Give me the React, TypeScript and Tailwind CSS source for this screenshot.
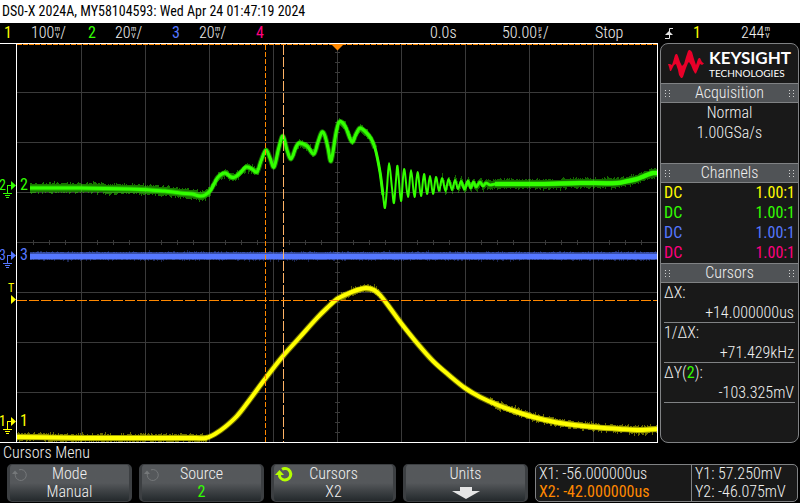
import type { ReactNode } from "react";

type Point = [number, number];

const YELLOW = "#ffff00";
const GREEN = "#33ff00";
const BLUE = "#5577ff";
const ORANGE = "#ff8800";

const greenPoints: Point[] = [
  [30, 188], [80, 188], [130, 189], [150, 190], [165, 191], [180, 193], [192, 194], [200, 196], [205, 195],
  [210, 191], [214, 184], [218, 177], [225, 173], [231, 177], [235, 177], [240, 173], [246, 167], [252, 169],
  [257, 172], [261, 161], [266, 150], [270, 158], [274, 167], [279, 147], [283, 136], [287, 150], [291, 159],
  [296, 147], [299, 143], [307, 146], [314, 154], [318, 142], [322, 132], [325, 136], [328, 148], [331, 161],
  [336, 133], [339, 122], [345, 126], [352, 142], [356, 134], [360, 128], [370, 137], [375, 148], [380, 172],
  [383, 195], [385, 208], [387, 188], [389, 163], [392, 188], [394, 203], [396, 180], [397.5, 166], [401, 201],
  [404, 169], [408, 197], [411, 170], [414.5, 197], [417.5, 172], [421, 196], [424, 174], [427, 194], [430, 176],
  [433, 194], [436, 177], [439, 191], [442, 178], [445.5, 191], [448.5, 179], [452, 190], [455, 180], [458, 189],
  [461, 181], [464.5, 189], [468, 181], [470.5, 188], [473.5, 182], [476, 187], [480, 182], [483, 186],
  [486, 183], [490, 185], [495, 184], [500, 184], [540, 184], [580, 183], [617, 183], [628, 181], [637, 179],
  [642, 177], [647, 175], [653, 173], [657, 173],
];

const yellowPoints: Point[] = [
  [17, 437], [80, 438], [140, 438], [196, 438], [206, 438], [215, 434], [225, 427], [237, 416], [248, 402],
  [265, 379], [283, 356], [300, 337], [317, 318], [327, 308], [337, 299], [347, 294], [357, 290], [366, 288],
  [374, 290], [380, 295], [390, 308], [401, 323], [417, 343], [433, 361], [450, 376], [465, 388], [480, 397],
  [500, 406], [520, 413], [537, 418], [560, 423], [593, 427], [620, 429], [637, 430], [657, 429],
];

// Catmull-Rom spline through the samples, written as cubic segments.
function spline(points: Point[]): string {
  let d = `M${points[0][0]} ${points[0][1]}`;
  for (let i = 0; i < points.length - 1; i++) {
    const a = points[Math.max(i - 1, 0)];
    const b = points[i];
    const c = points[i + 1];
    const e = points[Math.min(i + 2, points.length - 1)];
    const dx = (c[0] - b[0]) / 3;
    const s1 = (c[1] - a[1]) / (c[0] - a[0] || 1);
    const s2 = (e[1] - b[1]) / (e[0] - b[0] || 1);
    d += `C${b[0] + dx} ${b[1] + s1 * dx} ${c[0] - dx} ${c[1] - s2 * dx} ${c[0]} ${c[1]}`;
  }
  return d;
}

function valueAt(points: Point[], x: number): number {
  const i = Math.max(1, points.findIndex((p) => p[0] >= x));
  const [x0, y0] = points[i - 1];
  const [x1, y1] = points[i];
  return y0 + ((y1 - y0) * (x - x0)) / (x1 - x0);
}

// One-pixel columns of acquisition noise around a trace.
function noise(points: Point[], from: number, to: number, reach: number, seed: number): string {
  let state = seed;
  const next = () => {
    state = (state * 1103515245 + 12345) % 2147483648;
    return state / 2147483648;
  };
  let d = "";
  for (let x = from; x < to; x++) {
    const y = Math.round(valueAt(points, x));
    const up = Math.round(reach - 1 + next() * 3 * next());
    const down = Math.round(reach - 1 + next() * 3 * next());
    d += `M${x + 0.5} ${y - up}V${y + down}`;
  }
  return d;
}

const bluePoints: Point[] = [[30, 256], [657, 256]];
const range = (n: number) => Array.from({ length: n }, (_, i) => i);

function GroundMarker({ y, color, label }: { y: number; color: string; label: string }) {
  return (
    <g fill={color} stroke="none">
      <text x="-1" y={y + 5} fontSize="14">{label}</text>
      <path d={`M11 ${y - 4}V${y + 5}L16 ${y + 0.5}Z`} />
      <g shapeRendering="crispEdges">
        <path
          d={`M11 ${y + 0.5}H7.5V${y + 8}M3 ${y + 8.5}H12M5 ${y + 10.5}H10M6 ${y + 12.5}H9`}
          fill="none"
          stroke={color}
        />
      </g>
      <text x="20" y={y + 5} fontSize="16">{label}</text>
    </g>
  );
}

function Graticule() {
  return (
    <svg viewBox="0 43 660 400" className="block w-full font-normal" role="img" aria-label="Oscilloscope traces">
      <g stroke="#3a3a3a" fill="none" shapeRendering="crispEdges">
        {range(9).map((i) => (
          <path key={i} d={`M${81.5 + i * 64} 44V442`} />
        ))}
        {range(7).map((i) => (
          <path key={i} d={`M17 ${92.5 + i * 50}H657`} />
        ))}
        {range(39).map((i) => (
          <path key={i} d={`M${33.5 + i * 16} 240V245`} />
        ))}
        {range(39).map((i) => (
          <path key={i} d={`M335 ${52.5 + i * 10}H340`} />
        ))}
      </g>

      <g fill="none" strokeLinejoin="round">
        <g stroke={BLUE} shapeRendering="crispEdges">
          <path d={noise(bluePoints, 30, 657, 4, 5)} opacity="0.3" />
          <path d="M30 256H657" strokeWidth="8" opacity="0.5" />
          <path d="M30 256.5H657" strokeWidth="5" />
        </g>
        <g stroke={GREEN}>
          <path d={noise(greenPoints, 30, 210, 5, 11)} opacity="0.45" />
          <path d={noise(greenPoints, 210, 260, 4, 12)} opacity="0.4" />
          <path d={noise(greenPoints, 294, 314, 4, 13)} opacity="0.4" />
          <path d={noise(greenPoints, 338, 374, 4, 14)} opacity="0.4" />
          <path d={noise(greenPoints, 440, 657, 5, 15)} opacity="0.4" />
          <path d={spline(greenPoints.filter((p) => p[0] < 376))} strokeWidth="5" opacity="0.45" />
          <path d={spline(greenPoints.filter((p) => p[0] < 384))} strokeWidth="3" />
          <path d={spline(greenPoints.filter((p) => p[0] > 494))} strokeWidth="5" opacity="0.6" />
          <path d={spline(greenPoints.filter((p) => p[0] > 494))} strokeWidth="4" />
          <path d={spline(greenPoints.filter((p) => p[0] > 460))} strokeWidth="3" opacity="0.8" />
          <path d={spline(greenPoints)} strokeWidth="2" />
        </g>
        <g stroke={YELLOW}>
          <path d={noise(yellowPoints, 17, 207, 4, 21)} opacity="0.4" />
          <path d={noise(yellowPoints, 340, 380, 4, 22)} opacity="0.35" />
          <path d={noise(yellowPoints, 490, 657, 4, 23)} opacity="0.4" />
          <path d={spline(yellowPoints)} strokeWidth="6" opacity="0.4" />
          <path d={spline(yellowPoints)} strokeWidth="4" />
        </g>
      </g>

      <g fill="none" shapeRendering="crispEdges">
        <path d="M17 44.5H657" stroke={ORANGE} strokeDasharray="5 1" />
        <path d="M265.5 45V442" stroke={ORANGE} strokeDasharray="5 2" />
        <path d="M283.5 45V442" stroke="#ffb366" strokeDasharray="10 2" />
        <path d="M17 300.5H657" stroke={ORANGE} strokeDasharray="10 2" />
        <path d="M0 43.5H658M16.5 43V443M657.5 43V443M0 442.5H658" stroke="#fff" />
      </g>
      <path d="M331 44H344L337.5 50.5Z" fill={ORANGE} />

      <GroundMarker y={185} color={GREEN} label="2" />
      <GroundMarker y={255} color={BLUE} label="3" />
      <GroundMarker y={421} color={YELLOW} label="1" />
      <text x="8" y="292" fontSize="12" fill={YELLOW}>T</text>
      <path d="M11 295V304L16 299.5Z" fill={YELLOW} />
    </svg>
  );
}

function Unit({ top, bottom }: { top: string; bottom: string }) {
  return (
    <span className="flex w-[6px] flex-col items-center text-[7px] leading-[7px] font-normal">
      <span>{top}</span>
      <span>{bottom}</span>
    </span>
  );
}

function ChannelScale({ id, scale, tone }: { id: string; scale: string; tone: string }) {
  return (
    <div className="flex items-center">
      <span className={`w-[27px] font-normal ${tone}`}>{id}</span>
      <span>{scale}</span>
      <Unit top="m" bottom="V" />
      <span>/</span>
    </div>
  );
}

function StatusBar() {
  return (
    <div className="grid h-5 grid-cols-[84fr_84fr_84fr_174fr_72fr_93fr_70fr_28fr_48fr_55fr] items-center px-1 leading-5">
      <ChannelScale id="1" scale="100" tone="text-[#ffff00]" />
      <ChannelScale id="2" scale="20" tone="text-[#33ff00]" />
      <ChannelScale id="3" scale="20" tone="text-[#5577ff]" />
      <span className="font-normal text-[#ff0080]">4</span>
      <span>0.0s</span>
      <span className="flex items-center">
        50.00
        <Unit top="µ" bottom="s" />/
      </span>
      <span>Stop</span>
      <svg viewBox="0 0 8 11" className="h-[11px] w-2" aria-label="Rising edge trigger">
        <path d="M0 10.5H4.5V0.5H8" fill="none" stroke="#e5e5e5" />
        <path d="M0 7L4 3L8 7Z" fill="#e5e5e5" />
      </svg>
      <span className="font-normal text-[#ffff00]">1</span>
      <span className="flex items-center">
        244
        <Unit top="m" bottom="V" />
      </span>
    </div>
  );
}

function Grip() {
  return (
    <svg viewBox="0 0 5 7" className="h-[7px] w-[5px]" shapeRendering="crispEdges" aria-hidden="true">
      <path d="M0 0h1v1H0zM4 0h1v1H4zM0 3h1v1H0zM4 3h1v1H4zM0 6h1v1H0zM4 6h1v1H4z" fill="#d0d0d0" />
    </svg>
  );
}

function PanelHeading({ children }: { children: ReactNode }) {
  return (
    <h2 className="flex h-5 items-center justify-between border-y border-[#808284] bg-[#505356] px-1 leading-[18px]">
      <Grip />
      {children}
      <Grip />
    </h2>
  );
}

function Measurement({ label, value }: { label: ReactNode; value: string }) {
  return (
    <div className="mx-[3px] h-10 border-b border-[#808284] leading-5">
      <dt>{label}</dt>
      <dd className="pr-px text-right leading-[19px]">{value}</dd>
    </div>
  );
}

const probes = [
  { tone: "text-[#ffff00]", name: "Channel 1" },
  { tone: "text-[#33ff00]", name: "Channel 2" },
  { tone: "text-[#5577ff]", name: "Channel 3" },
  { tone: "text-[#ff0080]", name: "Channel 4" },
];

function SidePanel() {
  return (
    <aside className="w-[139px] shrink-0 overflow-hidden rounded-lg border border-[#808284] bg-[#191919]">
      <div className="flex h-[39px] items-center gap-[5px] pl-[7px]">
        <svg viewBox="0 0 36 28" className="h-7 w-9 shrink-0" aria-hidden="true">
          <path
            d="M0 14H2L4 15L5 12L7 5L8 4H9L10 6L12 12L14 16L16 14L18 7L20 1L21 0H22L24 2L26 9L28 15L30 9L31 8H32L34 12L36 13.5L34 15L32 14L30 19L28 23.5H27L25 20L23 15L21 12L20 13L18 18L15 27L14 28H13L11 25L10 20L8 14L6 15L4 19L3 21H2L1 17Z"
            fill="#e90029"
          />
        </svg>
        <div className="font-['Lato','Liberation_Sans',sans-serif] text-white">
          <div className="text-[17px] leading-[18px] font-bold">KEYSIGHT</div>
          <div className="text-[10px] leading-3 font-normal">TECHNOLOGIES</div>
        </div>
      </div>
      <PanelHeading>Acquisition</PanelHeading>
      <div className="h-[60px] text-center leading-5">
        <p>Normal</p>
        <p>1.00GSa/s</p>
      </div>
      <PanelHeading>Channels</PanelHeading>
      <ul className="leading-5 font-normal">
        {probes.map((probe) => (
          <li key={probe.name} className={`flex justify-between px-[3px] ${probe.tone}`}>
            <span>DC</span>
            <span>1.00:1</span>
          </li>
        ))}
      </ul>
      <PanelHeading>Cursors</PanelHeading>
      <dl>
        <Measurement label="ΔX:" value="+14.000000us" />
        <Measurement label="1/ΔX:" value="+71.429kHz" />
        <Measurement
          label={
            <>
              ΔY(<span className="font-normal text-[#33ff00]">2</span>):
            </>
          }
          value="-103.325mV"
        />
      </dl>
    </aside>
  );
}

function KnobIcon({ active }: { active: boolean }) {
  const color = active ? "#b4ff00" : "#75787a";
  return (
    <svg viewBox="0 0 18 17" className="absolute top-px left-px h-[17px] w-[18px]" aria-hidden="true">
      <path
        d={active ? "M7 3.2A5.8 5.8 0 1 1 4.6 10.5V7" : "M8 3.8A5.5 5.5 0 1 1 4.3 9.5V7"}
        fill="none"
        stroke={color}
        strokeWidth={active ? 3 : 1}
      />
      <path d={active ? "M0 9L4.5 4L9 9Z" : "M1 8L4 4.5L7 8Z"} fill={color} />
    </svg>
  );
}

function Softkey({ title, children, knob }: { title: string; children: ReactNode; knob?: "idle" | "active" }) {
  return (
    <button
      type="button"
      className="relative flex h-[38px] flex-1 flex-col items-center rounded-[5px] border-x-[3px] border-y border-[#3c3f42] bg-linear-to-b from-[#55585b] from-50% to-[#24292c] leading-[18px]"
    >
      {knob && <KnobIcon active={knob === "active"} />}
      <span>{title}</span>
      {children}
    </button>
  );
}

export default function App() {
  return (
    <div className="min-h-screen bg-black font-['Roboto_Condensed','Liberation_Sans',sans-serif] text-[16px] font-light text-[#f0f0f0]">
      <header className="h-[23px] bg-white pl-[2px] text-[14px] leading-[23px] font-normal whitespace-nowrap text-black">
        DS0-X 2024A, MY58104593: Wed Apr 24 01:47:19 2024
      </header>
      <StatusBar />
      <main className="flex pr-px">
        <div className="min-w-0 flex-1">
          <Graticule />
        </div>
        <SidePanel />
      </main>
      <footer>
        <h2 className="h-5 pl-[3px] leading-5">Cursors Menu</h2>
        <div className="flex gap-[7px] pt-px pr-[2px] pl-[7px]">
          <Softkey title="Mode" knob="idle">
            <span>Manual</span>
          </Softkey>
          <Softkey title="Source" knob="idle">
            <span className="font-normal text-[#33ff00]">2</span>
          </Softkey>
          <Softkey title="Cursors" knob="active">
            <span>X2</span>
          </Softkey>
          <Softkey title="Units">
            <svg viewBox="0 0 28 12" className="mt-1 h-3 w-7" aria-hidden="true">
              <path d="M8 0H20V4H28L14 12L0 4H8Z" fill="#e5e5e5" />
            </svg>
          </Softkey>
          <div className="grid h-[38px] w-[263px] shrink-0 grid-cols-[156px_1fr] overflow-hidden rounded-[5px] border border-[#808284] bg-[#191919] leading-[18px] whitespace-nowrap">
            <div className="border-r border-[#808284] pl-[3px]">
              <p>X1: -56.000000us</p>
              <p className="font-normal text-[#ff8800]">X2: -42.000000us</p>
            </div>
            <div className="pl-[3px]">
              <p>Y1: 57.250mV</p>
              <p>Y2: -46.075mV</p>
            </div>
          </div>
        </div>
      </footer>
    </div>
  );
}
